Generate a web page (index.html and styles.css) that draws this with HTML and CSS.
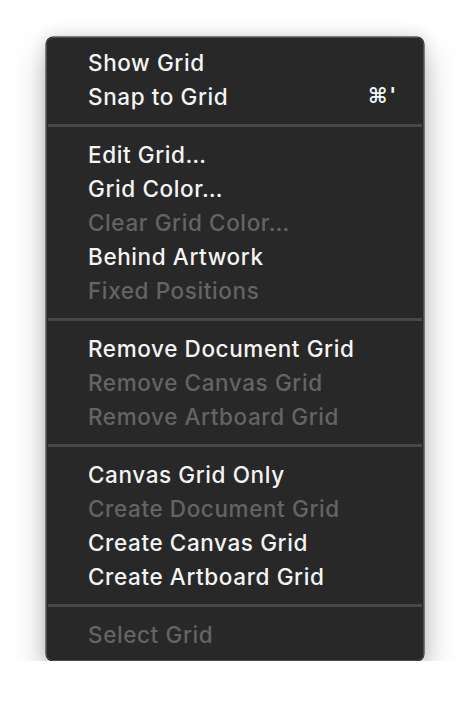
FILE: index.html
```html
<!DOCTYPE html>
<html lang="en">
<head>
    <meta charset="UTF-8">
    <title>Grid Menu</title>
    <link rel="stylesheet" href="styles.css">
</head>
<body>
    <div class="menu">
        <div class="item">Show Grid</div>
        <div class="item">Snap to Grid <span class="shortcut">&#8984;'</span></div>
        <div class="separator"></div>
        <div class="item">Edit Grid…</div>
        <div class="item">Grid Color…</div>
        <div class="item disabled">Clear Grid Color…</div>
        <div class="item">Behind Artwork</div>
        <div class="item disabled">Fixed Positions</div>
        <div class="separator"></div>
        <div class="item">Remove Document Grid</div>
        <div class="item disabled">Remove Canvas Grid</div>
        <div class="item disabled">Remove Artboard Grid</div>
        <div class="separator"></div>
        <div class="item">Canvas Grid Only</div>
        <div class="item disabled">Create Document Grid</div>
        <div class="item">Create Canvas Grid</div>
        <div class="item">Create Artboard Grid</div>
        <div class="separator"></div>
        <div class="item disabled">Select Grid</div>
    </div>
</body>
</html>
```

FILE: styles.css
```css
body {
    margin: 0;
    padding: 37px 0 0 46px;
    background-color: #fff;
    font-family: Inter, "Noto Sans", sans-serif;
}

.menu {
    width: 376px;
    padding: 8px 0;
    background: #282828;
    border: 1px solid #4e4e4e;
    border-radius: 7px;
    box-shadow: 0 0 0 0.5px #1a1a1a, 0 0 16px rgba(0, 0, 0, 0.14), 0 16px 34px rgba(0, 0, 0, 0.26);
}

.item {
    display: flex;
    justify-content: space-between;
    align-items: center;
    height: 32px;
    padding: 0 27px 2px 41px;
    color: #f4f4f4;
    font-size: 22.5px;
    font-weight: 500;
    letter-spacing: 0.6px;
}

.item.disabled {
    color: #646464;
}

.shortcut {
    font-family: "DejaVu Sans", sans-serif;
    font-size: 21px;
    font-weight: bold;
    letter-spacing: 2px;
    margin-right: -2px;
}

.separator {
    height: 3px;
    margin: 10px 1px 11px;
    background: #484848;
}
```
